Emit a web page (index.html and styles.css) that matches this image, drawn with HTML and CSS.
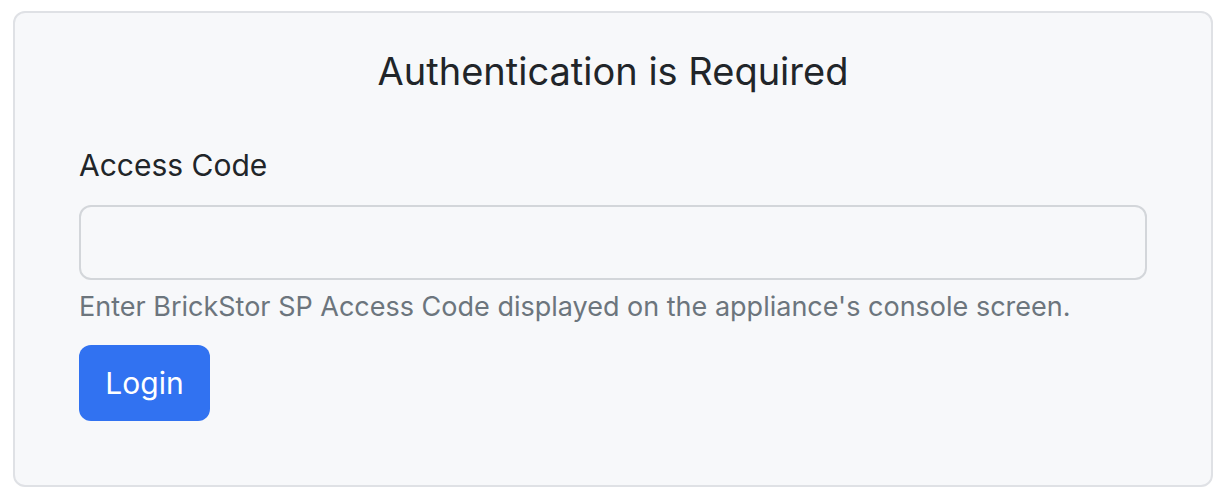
FILE: index.html
```html
<!DOCTYPE html>
<html>
<head>
<meta charset="utf-8">
<link rel="stylesheet" href="styles.css">
</head>
<body>
<div class="card">
  <h1 class="title">Authentication is Required</h1>
  <form class="form">
    <label class="label" for="code">Access Code</label>
    <input class="input" id="code" type="text">
    <div class="help">Enter BrickStor SP Access Code displayed on the appliance's console screen.</div>
    <button class="btn" type="button">Login</button>
  </form>
</div>
</body>
</html>
```
FILE: styles.css
```css
* { box-sizing: border-box; }
html, body { margin: 0; background: #ffffff; }
body {
  padding: 11px 13px 0 13px;
  font-family: Inter, "Noto Sans", sans-serif;
  color: #212529;
}
.card {
  width: 1200px;
  height: 476px;
  background: #f7f8fa;
  border: 2px solid #dfe1e5;
  border-radius: 12px;
  padding: 0 64px;
}
.title {
  margin: 0;
  padding-top: 34px;
  text-align: center;
  font-size: 38px;
  font-weight: 400;
  line-height: 48px;
}
.form {
  display: flex;
  flex-direction: column;
  align-items: flex-start;
  padding-top: 50px;
}
.label {
  font-size: 30px;
  line-height: 40px;
}
.input {
  margin-top: 20px;
  width: 100%;
  height: 75px;
  border: 2px solid #d3d6da;
  border-radius: 12px;
  background: #f7f8fa;
}
.help {
  margin-top: 9px;
  font-size: 27px;
  line-height: 36px;
  color: #6c757d;
}
.btn {
  margin-top: 20px;
  width: 131px;
  height: 76px;
  border: none;
  border-radius: 12px;
  background: #3172f1;
  color: #fff;
  font-family: Inter, "Noto Sans", sans-serif;
  font-size: 30px;
}
```
